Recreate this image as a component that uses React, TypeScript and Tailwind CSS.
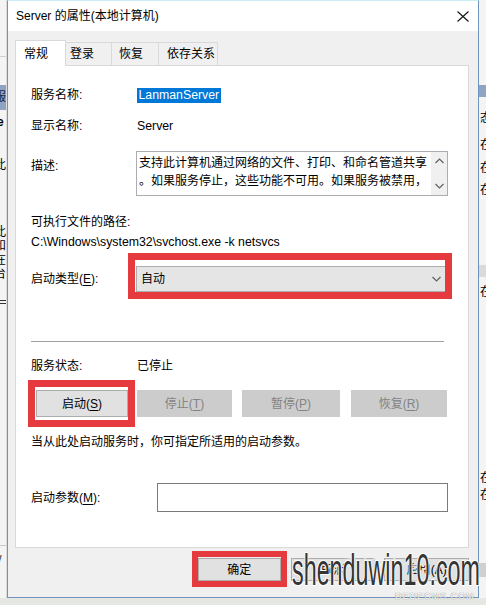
import React from "react";

const U = ({ c }: { c: string }) => (
  <span className="underline underline-offset-[2px] decoration-[1px]">{c}</span>
);

function Chevron({ up = false, className = "" }: { up?: boolean; className?: string }) {
  return (
    <svg width="9" height="6" viewBox="0 0 9 6" className={className}>
      <path
        d={up ? "M0.5 5 L4.5 1 L8.5 5" : "M0.5 1 L4.5 5 L8.5 1"}
        fill="none"
        stroke="#606060"
        strokeWidth="1.2"
      />
    </svg>
  );
}

function Btn({
  w,
  children,
  disabled = false,
  className = "",
}: {
  w: string;
  children: React.ReactNode;
  disabled?: boolean;
  className?: string;
}) {
  return (
    <div
      className={`${w} h-full flex items-center justify-center border ${
        disabled
          ? "bg-[#cccccc] border-[#cccccc] text-[#838383]"
          : "bg-[#e1e1e1] border-[#adadad] text-black"
      } ${className}`}
    >
      {children}
    </div>
  );
}

export default function App() {
  return (
    <div className="relative w-[486px] h-[605px] overflow-hidden flex items-start bg-[#e4e7e2] text-[12px] leading-none text-black font-['Segoe_UI','Liberation_Sans','Noto_Sans_CJK_SC',sans-serif]">
      {/* left background window fragment */}
      <div className="relative w-[7px] h-[598px] bg-[#f4f4f4] overflow-hidden border-r border-[#dcdcdc]">
        <div className="absolute left-0 right-0 top-[56px] h-px bg-[#d0d0d0]" />
        <div className="absolute left-0 right-0 top-[85px] h-[25px] bg-[#8fa4c1]" />
        <span className="absolute left-[-6px] top-[91px] text-[12px] text-[#1b2a40]">服</span>
        <span className="absolute left-[-3px] top-[116px] font-bold text-[12px]">e</span>
        <span className="absolute left-[-6px] top-[159px] text-[12px]">此</span>
        <span className="absolute left-[-6px] top-[226px] text-[12px]">此</span>
        <span className="absolute left-[-6px] top-[240px] text-[12px]">和</span>
        <span className="absolute left-[-6px] top-[254px] text-[12px]">在</span>
        <span className="absolute left-[-6px] top-[268px] text-[12px]">台</span>
        <span className="absolute left-0 right-0 top-[300px] h-px bg-[#333]" />
        <span className="absolute left-0 right-0 top-[303px] h-px bg-[#333]" />
        <div className="absolute left-0 right-0 top-[545px] h-px bg-[#c8c8c8]" />
        <span className="absolute left-[-2px] top-[553px] text-[13px] text-[#333]">/</span>
      </div>

      {/* dialog */}
      <div className="w-[472px] h-[598px] flex flex-col border border-[#6f93bf] border-t-[#c9eef5] bg-[#f0f0f0]">
        {/* title bar */}
        <div className="h-[30px] bg-white flex items-center justify-between pl-[8px] pr-[9px]">
          <span className="text-[12px] text-black">Server 的属性(本地计算机)</span>
          <svg width="12" height="11" viewBox="0 0 12 11">
            <path d="M0.5 0.5 L11.5 10.5 M11.5 0.5 L0.5 10.5" stroke="#111" strokeWidth="1.1" fill="none" />
          </svg>
        </div>

        {/* body */}
        <div className="flex-1 flex flex-col pl-[7px] pr-[9px]">
          {/* tabs */}
          <div className="mt-[9px] h-[25px] flex items-end relative z-10">
            <div className="w-[51px] h-[26px] -mb-px bg-white border border-b-0 border-[#d9d9d9] flex items-center pl-[8px]">
              常规
            </div>
            <div className="w-[46px] h-[23px] border border-l-0 border-b-0 border-[#d9d9d9] flex items-center pl-[4px]">
              登录
            </div>
            <div className="w-[47px] h-[23px] border border-l-0 border-b-0 border-[#d9d9d9] flex items-center pl-[7px]">
              恢复
            </div>
            <div className="w-[59px] h-[23px] border border-l-0 border-b-0 border-[#d9d9d9] flex items-center pl-[8px]">
              依存关系
            </div>
          </div>

          {/* panel */}
          <div className="h-[483px] bg-white border border-[#d9d9d9] flex flex-col pl-[15px] pr-[20px]">
            <div className="mt-[19px] h-[20px] flex items-center">
              <span className="w-[106px]">服务名称:</span>
              <span className="bg-[#0078d7] text-white h-[15px] flex items-center px-[1.5px] text-[12.3px]">LanmanServer</span>
            </div>
            <div className="mt-[11px] h-[20px] flex items-center">
              <span className="w-[106px]">显示名称:</span>
              <span className="text-[12.3px]">Server</span>
            </div>
            <div className="mt-[15px] h-[45px] flex items-start">
              <span className="w-[105px] pt-[9px]">描述:</span>
              <div className="flex-1 h-full border border-[#abadb3] flex">
                <div className="flex-1 pl-[2px] pt-[5px] flex flex-col gap-[6px] text-[12px] overflow-hidden whitespace-nowrap">
                  <span>支持此计算机通过网络的文件、打印、和命名管道共享</span>
                  <span>。如果服务停止，这些功能不可用。如果服务被禁用，</span>
                </div>
                <div className="w-[16px] h-full bg-[#f0f0f0] flex flex-col items-center justify-between py-[6px]">
                  <Chevron up />
                  <Chevron />
                </div>
              </div>
            </div>
            <div className="mt-[16px] h-[20px] flex items-center">可执行文件的路径:</div>
            <div className="h-[20px] flex items-center text-[12.3px]">C:\Windows\system32\svchost.exe -k netsvcs</div>
            <div className="mt-[14px] h-[26px] flex items-center">
              <span className="w-[105px]">
                启动类型(<U c="E" />):
              </span>
              <div className="flex-1 mr-px h-full bg-[#e5e5e5] border border-[#adadad] flex items-center justify-between pl-[4px] pr-[5px]">
                <span>自动</span>
                <Chevron />
              </div>
            </div>
            <div className="mt-[49px] h-px bg-[#a0a0a0] mr-[4px]" />
            <div className="mt-[14px] h-[20px] flex items-center">
              <span className="w-[106px]">服务状态:</span>
              <span>已停止</span>
            </div>
            <div className="mt-[14px] h-[27px] flex pl-[5px]">
              <Btn w="w-[92px]">
                启动(<U c="S" />)
              </Btn>
              <Btn w="w-[95px]" disabled className="ml-[9px]">
                停止(<U c="T" />)
              </Btn>
              <Btn w="w-[98px]" disabled className="ml-[10px]">
                暂停(<U c="P" />)
              </Btn>
              <Btn w="w-[96px]" disabled className="ml-[11px]">
                恢复(<U c="R" />)
              </Btn>
            </div>
            <div className="mt-[15px] h-[20px] flex items-center">当从此处启动服务时，你可指定所适用的启动参数。</div>
            <div className="mt-[31px] h-[29px] flex items-center">
              <span className="w-[126px]">
                启动参数(<U c="M" />):
              </span>
              <div className="flex-1 h-full border border-[#7a7a7a] bg-white" />
            </div>
          </div>

          {/* bottom buttons */}
          <div className="pt-[10px] pl-[183px] flex h-[33px]">
            <Btn w="w-[83px]">确定</Btn>
            <Btn w="w-[85px]" className="ml-[10px]">取消</Btn>
            <Btn w="w-[85px]" className="ml-[9px]">应用(A)</Btn>
          </div>
        </div>
      </div>

      {/* right background window fragment */}
      <div className="relative flex-1 h-[598px] bg-[#f4f4f4] overflow-hidden">
        <div className="absolute left-0 right-0 top-[85px] h-[12px] bg-[#8fa4c1]" />
        <span className="absolute left-[1px] top-[112px]">态</span>
        <span className="absolute left-[1px] top-[139px]">在</span>
        <span className="absolute left-[1px] top-[162px]">在</span>
        <span className="absolute left-[1px] top-[184px]">在</span>
        <div className="absolute left-0 right-0 top-[265px] h-[12px] bg-[#dadada]" />
        <span className="absolute left-[1px] top-[286px]">在</span>
        <span className="absolute left-[1px] top-[472px]">在</span>
        <span className="absolute left-[1px] top-[489px]">在</span>
        <div className="absolute left-0 right-0 top-[563px] h-[14px] bg-[#d0d0d0]" />
      </div>

      {/* red annotation boxes */}
      <div className="absolute left-[128px] top-[253px] w-[324px] h-[46px] border-[7px] border-[#e53b3f]" />
      <div className="absolute left-[28px] top-[380px] w-[107px] h-[47px] border-[7px] border-[#e53b3f]" />
      <div className="absolute left-[192px] top-[551px] w-[95px] h-[36px] border-[6px] border-[#e53b3f]" />

      {/* watermark */}
      <div className="absolute left-[335px] top-[556px] text-[24px] leading-none text-[#e2e2e2] font-['Noto_Sans_CJK_SC',sans-serif]">
        系统之家
      </div>
      <div className="absolute left-[395px] top-[592px] text-[9px] leading-none tracking-[1px] text-white font-['Liberation_Sans',sans-serif] [text-shadow:0_0_1px_#555]">
        DEDECMS.COM
      </div>
      <div className="absolute left-[292px] top-[548px] origin-left scale-x-[0.53] text-[44px] leading-none text-[#353535] font-['Liberation_Sans',sans-serif] [text-shadow:1px_1px_0_#fff,-1px_-1px_0_#fff,1px_-1px_0_#fff,-1px_1px_0_#fff] whitespace-nowrap">
        shenduwin10.com
      </div>
    </div>
  );
}
